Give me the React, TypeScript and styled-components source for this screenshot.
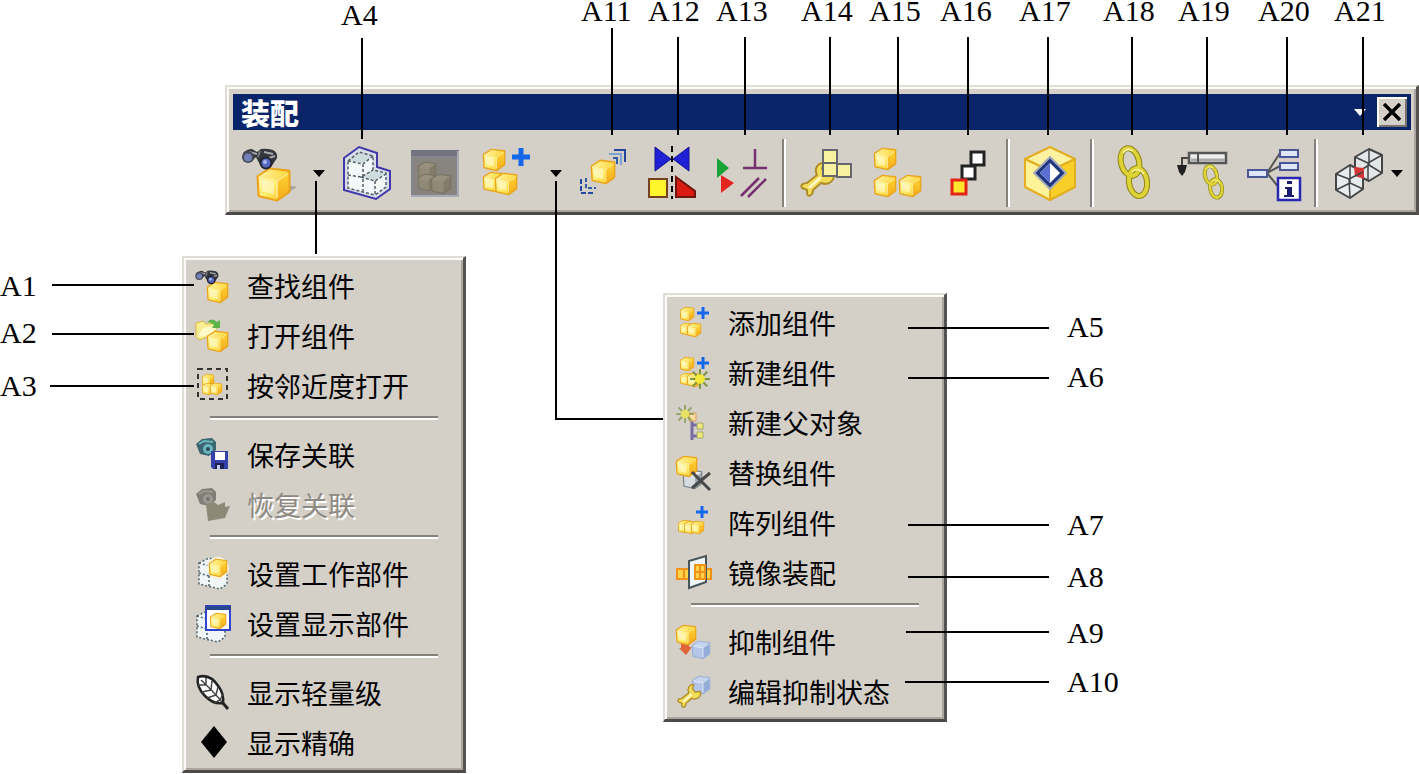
import React from "react";
import styled, { createGlobalStyle, css } from "styled-components";

const face = "#d4d0c8";

const GlobalStyle = createGlobalStyle`
  *, *::before, *::after { box-sizing: border-box; }
  body { margin: 0; background: #fff; }
  button { font: inherit; color: inherit; background: none; border: 0; padding: 0; margin: 0; }
`;

const Figure = styled.main`
  position: relative;
  display: flex;
  flex-direction: column;
  padding-top: 85px;
  color: #000;
  font-family: "Noto Sans CJK SC", "Noto Sans", sans-serif;
`;

const raised = css`
  background: ${face};
  border-style: solid;
  border-width: 2px 3px 3px 2px;
  border-color: #e0ddd6 #55524f #4c4a48 #e0ddd6;
  box-shadow: inset 2px 2px 0 #fbfaf8, inset -2px -2px 0 #aaa69f;
`;

const Toolbar = styled.section`
  ${raised}
  margin-left: 225px;
  padding: 7px 5px 0 6px;
`;

const TitleBar = styled.header`
  display: flex;
  align-items: center;
  height: 36px;
  padding: 0 4px 0 8px;
  background: #0a246a;
  color: #fff;
`;

const Title = styled.h1`
  flex: 1;
  margin: 0;
  font-size: 29px;
  line-height: 36px;
  font-weight: 900;
`;

const TitleCaret = styled.button`
  display: flex;
  justify-content: center;
  width: 14px;
  margin-right: 10px;
`;

const CloseButton = styled.button`
  display: flex;
  align-items: center;
  justify-content: center;
  width: 30px;
  height: 30px;
  background: ${face};
  box-shadow: inset 2px 2px 0 #fff, inset -2px -2px 0 #77736d;
`;

const Tools = styled.div`
  display: flex;
  height: 82px;
  padding-top: 15px;
`;

const Tool = styled.button<{ $narrow?: boolean }>`
  display: flex;
  justify-content: center;
  flex: none;
  width: ${(p) => (p.$narrow ? 64 : 70)}px;
  height: 56px;
`;

const DropArrow = styled.button<{ $narrow?: boolean }>`
  display: flex;
  align-items: center;
  justify-content: center;
  flex: none;
  width: ${(p) => (p.$narrow ? 20 : 27)}px;
  height: 56px;
  padding-left: ${(p) => (p.$narrow ? 0 : 4)}px;
`;

const ToolDivider = styled.span`
  flex: none;
  width: 4px;
  height: 68px;
  margin: -6px 5px 0;
  border-left: 2px solid #85817b;
  border-right: 2px solid #fff;
`;

const ToolSvg = styled.svg`
  display: block;
  width: 56px;
  height: 56px;
  overflow: visible;
`;

const Menus = styled.div`
  display: flex;
  align-items: flex-start;
  padding-left: 182px;
  gap: 197px;
`;

const Menu = styled.div<{ $drop: number }>`
  ${raised}
  width: 284px;
  margin-top: ${(p) => p.$drop}px;
  padding: 3px 0 2px;
`;

const MenuItem = styled.button`
  display: flex;
  align-items: center;
  width: 100%;
  height: 50px;
  padding-left: 10px;
  gap: 17px;
  font-size: 27px;
  line-height: 36px;
  white-space: nowrap;
  text-align: left;

  &:disabled {
    color: #8f8b84;
    text-shadow: 2px 2px 0 #fff;
  }
`;

const MenuSvg = styled.svg`
  flex: none;
  width: 36px;
  height: 36px;
  overflow: visible;
`;

const MenuDivider = styled.hr`
  height: 4px;
  margin: 5px 25px 10px 26px;
  border: 0;
  border-top: 2px solid #85817b;
  border-bottom: 2px solid #fff;
`;

const Leaders = styled.svg`
  position: absolute;
  inset: 0;
  width: 100%;
  height: 100%;
  pointer-events: none;
`;

const Callout = styled.span<{ $x: number; $y: number }>`
  position: absolute;
  left: ${(p) => p.$x}px;
  top: ${(p) => p.$y}px;
  font: 30px/22px "Liberation Serif", serif;
`;

const Defs = styled.svg`
  position: absolute;
  width: 0;
  height: 0;
`;

/* Drawing parts */

type Tone = "gold" | "blue" | "grey" | "mute";
const tones: Record<Tone, [string, string, string, string]> = {
  gold: ["url(#goldFront)", "url(#goldTop)", "url(#goldSide)", "#eba51d"],
  blue: ["#b3c6e8", "#c6d5ee", "#93acd8", "#9fb3d8"],
  grey: ["#d5dde3", "#eef2f4", "#9aa4ac", "#7b858c"],
  mute: ["#8f8976", "#98917d", "#827b69", "#7b7464"],
};

function Cube({ x, y, s, tone = "gold" }: { x: number; y: number; s: number; tone?: Tone }) {
  const [front, top, side, edge] = tones[tone];
  return (
    <g transform={`translate(${x} ${y}) scale(${s / 31})`} strokeLinejoin="round">
      <path d="M1 8 12 1 30 3V22L19 30 2 26Z" fill={edge} stroke={edge} strokeWidth="3" />
      <path d="M1.500 8 19 11V29.500L2.500 25.500Z" fill={front} />
      <path d="M1.500 8 12 1.500 29.500 3.500 19 11Z" fill={top} />
      <path d="M19 11 29.500 3.500V21.500L19 29.500Z" fill={side} />
      {tone === "gold" && <path d="M4 11 16 13V25L5 22Z" fill="#fffce0" opacity=".55" />}
      <path d="M3 9 19 12 29 5M19 12V28" fill="none" stroke={tone === "gold" ? "#fff6b0" : "#fff"} strokeWidth="1.500" opacity={tone === "mute" ? 0.1 : 0.7} />
    </g>
  );
}

function Plus({ x, y, r, w }: { x: number; y: number; r: number; w: number }) {
  return <path d={`M${x - r} ${y}H${x + r}M${x} ${y - r}V${y + r}`} stroke="#1467e8" strokeWidth={w} />;
}

function Binoculars({ scale = 1 }: { scale?: number }) {
  return (
    <g transform={`scale(${scale})`}>
      <path d="M3 8Q7 4 12 4L17 7 21 4Q26 3 33 5 38 8 37 13L31 22 22 22 18 16 16 12 11 17 4 16Z" fill="#34363b" />
      <path d="M9 7 17 9M24 7 33 9M29 13 35 11" stroke="#a7a9ae" strokeWidth="2" />
      <path d="M20 6 18 12" stroke="#77797e" strokeWidth="2" />
      <circle cx="8" cy="12" r="6" fill="#454956" />
      <circle cx="8" cy="12.500" r="4" fill="#7481b8" />
      <circle cx="26" cy="18" r="6.500" fill="#22242b" />
      <circle cx="26" cy="18" r="4.500" fill="#5768c4" />
      <circle cx="25" cy="17" r="2" fill="#aab7ef" />
    </g>
  );
}

function Wrench({ x, y, scale = 1 }: { x: number; y: number; scale?: number }) {
  return (
    <g transform={`translate(${x} ${y}) scale(${scale})`} strokeLinejoin="round" strokeLinecap="round">
      <path
        d="M2 27C0 24 3 22 7 22L17 14C14 8 17 2 24 2L22 8 26 13 33 12C36 19 29 25 21 22L13 29C13 35 8 36 7 33L7 29Z"
        fill="#f3dc57"
        stroke="#b08d2b"
        strokeWidth="2"
      />
      <path d="M10 26 20 17" stroke="#fff8c8" strokeWidth="3" />
    </g>
  );
}

function Star({ x, y, r }: { x: number; y: number; r: number }) {
  const d = r * 0.72;
  return (
    <g>
      <path
        d={`M${x - r} ${y}H${x + r}M${x} ${y - r}V${y + r}M${x - d} ${y - d}L${x + d} ${y + d}M${x - d} ${y + d}L${x + d} ${y - d}`}
        stroke="#7d9441"
        strokeWidth="2"
      />
      <circle cx={x} cy={y} r={r * 0.48} fill="#f3e93a" />
    </g>
  );
}

function Ghost() {
  return (
    <g stroke="#566a70" strokeWidth="1.6" strokeDasharray="2 2" fill="#f1f6f7">
      <path d="M5 7 15 2 24 5V16L33 19V28L26 33 5 28Z" />
      <path d="M5 17 15 20 24 16M15 20V30M5 7 15 10V20" fill="none" />
    </g>
  );
}

function ChainLinks({ scale = 1, x = 0, y = 0 }: { scale?: number; x?: number; y?: number }) {
  const links = (
    <>
      <ellipse cx="24" cy="17" rx="9" ry="14" transform="rotate(-14 24 17)" />
      <ellipse cx="32" cy="37" rx="9" ry="14" transform="rotate(-8 32 37)" />
    </>
  );
  return (
    <g fill="none" transform={`translate(${x} ${y}) scale(${scale})`}>
      <g stroke="#8e8618" strokeWidth="6">{links}</g>
      <g stroke="#ded336" strokeWidth="4">{links}</g>
      <path d="M17 8Q21 2 27 6M26 27Q32 21 38 29" stroke="#f8f3a0" strokeWidth="1.500" />
    </g>
  );
}

const Caret = ({ fill = "#000" }: { fill?: string }) => (
  <svg width="12" height="7" viewBox="0 0 12 7" aria-hidden="true">
    <path d="M0 0H12L6 7Z" fill={fill} />
  </svg>
);

/* Toolbar drawings, 56 x 56 */

const toolArt: Record<string, React.ReactNode> = {
  find: (
    <>
      <path d="M38 54 57 42 48 40Z" fill="#8b8880" opacity=".6" />
      <Cube x={17} y={23} s={33} />
      <Binoculars />
    </>
  ),
  show: (
    <>
      <path d="M7 13 22 2 40 8V22L53 26V44L39 54 7 45Z" fill="#d9dfe9" stroke="#4037a8" strokeWidth="2" />
      <path d="M11 16 22 7 36 11V25L49 28V42L38 50 11 43Z" fill="#f3f8f9" />
      <path d="M11 16 22 7 36 11 26 18ZM24 32 35 25 49 29 38 35Z" fill="#cddcdd" />
      <g fill="none" stroke="#565f69" strokeWidth="1.500" strokeDasharray="3 2">
        <path d="M11 16 22 7 36 11V25L49 28V42L38 50 11 43Z" />
        <path d="M11 16 26 19 36 11M26 19V46M11 30 24 32 36 25M24 32 38 36 49 29M38 36V50" />
      </g>
    </>
  ),
  context: (
    <>
      <path d="M4 5H52V52H4Z" fill="#85868a" />
      <path d="M4 5H52V11H4Z" fill="#72757f" />
      <path d="M7 13H49V49H7Z" fill="#88857f" />
      <path d="M4 51H51V6" stroke="#a9abb4" strokeWidth="2" fill="none" />
      <Cube x={11} y={17} s={18} tone="mute" />
      <Cube x={11} y={29} s={17} tone="mute" />
      <Cube x={24} y={29} s={20} tone="mute" />
    </>
  ),
  add: (
    <>
      <Cube x={6} y={4} s={22} />
      <Cube x={6} y={27} s={20} />
      <Cube x={18} y={28} s={22} />
      <Plus x={44} y={12} r={9} w={5} />
    </>
  ),
  move: (
    <>
      <Cube x={17} y={15} s={24} />
      <g fill="none" strokeWidth="2">
        <path d="M40 5H51V17" stroke="#24479f" />
        <path d="M35 9H47V20" stroke="#7aa1cf" />
        <path d="M39 13H43V19" stroke="#315da5" />
        <path d="M7 34V48H19" stroke="#24479f" strokeDasharray="5 2" />
        <path d="M12 33V43H22" stroke="#315da5" strokeDasharray="4 2" />
      </g>
    </>
  ),
  mirror: (
    <>
      <path d="M11 2V26L27 14ZM45 2V26L29 14Z" fill="#2020d4" stroke="#171792" />
      <path d="M28 1V54" stroke="#000" strokeWidth="2" strokeDasharray="6 4" />
      <path d="M5 34H23V52H5Z" fill="#fff52c" stroke="#75401b" strokeWidth="2" />
      <path d="M32 32 51 46V52H32Z" fill="#d91b12" stroke="#70160f" strokeWidth="2" />
    </>
  ),
  constrain: (
    <>
      <path d="M3 13V33L15 23Z" fill="#19a438" />
      <path d="M7 30V48L20 38Z" fill="#e52520" />
      <path d="M29 23H53M41 4V23M27 51 45 33M34 52 52 34" stroke="#76306f" strokeWidth="2.500" />
    </>
  ),
  edit: (
    <>
      <Wrench x={2} y={16} />
      <g fill="#f7f2a0" stroke="#65676d" strokeWidth="2">
        <path d="M25 5H39V18H25ZM25 18H39V31H25ZM39 19H53V32H39Z" />
      </g>
    </>
  ),
  explode: (
    <>
      <Cube x={6} y={3} s={22} />
      <Cube x={6} y={30} s={22} />
      <Cube x={31} y={30} s={22} />
    </>
  ),
  trace: (
    <g strokeWidth="3">
      <path d="M33 7H46V20H33Z" fill="#fff" stroke="#222" />
      <path d="M24 21H37V34H24Z" fill="#fff" stroke="#222" />
      <path d="M14 35H28V49H14Z" fill="#ffe52c" stroke="#e32419" />
    </g>
  ),
  product: (
    <>
      <g stroke="#e3ae20" strokeWidth="2" strokeLinejoin="round">
        <path d="M3 14 28 2 53 14 28 26Z" fill="#fff3a1" />
        <path d="M3 14 28 26V55L3 42Z" fill="#fff39a" />
        <path d="M53 14 28 26V55L53 42Z" fill="#f7cf28" />
      </g>
      <path d="M28 12 44 28 28 44 12 28Z" fill="#20377f" stroke="#a8abb5" strokeWidth="2" />
      <path d="M28 18 38 28 28 38 18 28Z" fill="#fff" />
      <path d="M28 18V38L18 28Z" fill="#5a6fd0" />
    </>
  ),
  link: <ChainLinks />,
  brokenLink: (
    <>
      <path d="M14 13H6V22" stroke="#444" strokeWidth="2" fill="none" />
      <path d="M1 20H11L9 27 6 31 3 27Z" fill="#222" />
      <path d="M13 8H50V18H13Z" fill="#eee" stroke="#555" strokeWidth="2.500" />
      <path d="M15 15H49" stroke="#a9a9a9" strokeWidth="3" />
      <path d="M22 8V18" stroke="#555" strokeWidth="2" />
      <ChainLinks x={19} y={19} scale={0.66} />
    </>
  ),
  info: (
    <>
      <path d="M21 28 34 8M21 28 34 21M21 28 34 44" stroke="#555" strokeWidth="2" />
      <g fill="#dfe6fb" stroke="#4a5797" strokeWidth="2">
        <path d="M34 5H52V12H34ZM34 18H52V25H34ZM2 25H21V32H2Z" />
      </g>
      <path d="M32 33H54V55H32Z" fill="#fff" stroke="#2727b0" strokeWidth="2.500" />
      <path d="M41 36H46V39H41ZM39 42H46V50H48V52H38V50H41V44H39Z" fill="#1b1b78" />
    </>
  ),
  clearance: (
    <g strokeWidth="2" strokeLinejoin="round" stroke="#434547">
      <path d="M28 12 42 4 55 10V28L42 36 28 29Z" fill="#e4e7e8" />
      <path d="M28 12 41 18 55 10M41 18V36M42 4V20L28 29M42 20 55 28" fill="none" strokeWidth="1.500" />
      <path d="M9 29 23 20 36 27V44L23 53 9 45Z" fill="#e9ecec" />
      <path d="M27 22 37 23V34L28 31Z" fill="#d73535" stroke="none" />
      <path d="M9 29 22 34 36 27M22 34 23 53M23 20V38L9 45M23 38 36 44" fill="none" strokeWidth="1.500" />
    </g>
  ),
};

/* Menu drawings, 36 x 36 */

const threeCubes = (
  <>
    <Cube x={5} y={2} s={14} />
    <Cube x={5} y={18} s={12} />
    <Cube x={12} y={18} s={14} />
  </>
);

const camera = (a: string, b: string, c: string) => (
  <>
    <path d="M2 7 8 2 18 1 22 5V13L15 19 6 17Z" fill={a} />
    <path d="M5 7 10 4 19 5" stroke={b} strokeWidth="2" fill="none" />
    <circle cx="14" cy="12" r="5" fill={b} />
    <circle cx="14" cy="12" r="2" fill={c} />
  </>
);

const menuArt: Record<string, React.ReactNode> = {
  find: (
    <>
      <Cube x={13} y={14} s={21} />
      <Binoculars scale={0.66} />
    </>
  ),
  open: (
    <>
      <path d="M2 5 9 3 12 6 22 5V15L6 22 2 19Z" fill="#f8ee90" stroke="#dbb640" />
      <path d="M3 19 9 10 24 7 18 17Z" fill="#fffac7" />
      <path d="M13 4Q18-1 23 4L26 2V10H18L20 7Q17 4 13 4Z" fill="#5ab447" />
      <Cube x={13} y={13} s={21} />
    </>
  ),
  proximity: (
    <>
      <path d="M4 1H33V31H4Z" fill="none" stroke="#333" strokeWidth="2" strokeDasharray="5 4" />
      <Cube x={8} y={6} s={12} />
      <Cube x={8} y={15} s={12} />
      <Cube x={16} y={15} s={12} />
    </>
  ),
  save: (
    <>
      {camera("#3b6570", "#6bb5bc", "#294c55")}
      <path d="M17 14H34V32H19L17 30Z" fill="#3340aa" />
      <path d="M21 15H31V23H21Z" fill="#fff" />
      <path d="M21 26H30V32H21Z" fill="#1c2153" />
      <path d="M23 28H26V32H23Z" fill="#c8caf0" />
    </>
  ),
  restore: (
    <>
      {camera("#807e77", "#9a9890", "#77756e")}
      <path d="M12 18 20 15 24 18 31 15V20L36 19 31 31 14 34Z" fill="#8e8977" />
    </>
  ),
  work: (
    <>
      <Ghost />
      <circle cx="24" cy="12" r="11" fill="#fff4da" />
      <Cube x={15} y={3} s={18} />
    </>
  ),
  display: (
    <>
      <g transform="translate(-2 3)"><Ghost /></g>
      <path d="M12 0H36V24H12Z" fill="#fff" stroke="#3044cb" strokeWidth="2" />
      <path d="M11 0H37V4H11Z" fill="#29458f" />
      <Cube x={16} y={7} s={16} />
    </>
  ),
  feather: (
    <>
      <path d="M4 2Q16-2 25 12 30 19 29 28 20 30 11 21 2 12 4 2Z" fill="#fff" stroke="#222" strokeWidth="2.500" />
      <path d="M28 27 34 34" stroke="#222" strokeWidth="3" />
      <path d="M7 5Q20 17 28 27M12 10 12 3M17 15 18 6M22 20 24 12M26 25 29 19M12 10 4 10M17 15 8 17M22 20 13 23M26 25 20 28" stroke="#444" strokeWidth="1.500" fill="none" />
    </>
  ),
  diamond: <path d="M20 1 33 17 20 33 7 17Z" fill="#000" />,
  add: (
    <>
      {threeCubes}
      <Plus x={28} y={8} r={6} w={3} />
    </>
  ),
  create: (
    <>
      {threeCubes}
      <Plus x={28} y={8} r={6} w={3} />
      <Star x={25} y={24} r={10} />
    </>
  ),
  parent: (
    <>
      <path d="M17 15V35M17 20H24M17 31H24" stroke="#776da3" strokeWidth="3" />
      <path d="M14 8H21V16H14Z" fill="#f7db9b" stroke="#d59e62" />
      <path d="M22 18H28V24H22ZM22 27H28V33H22Z" fill="#eee779" stroke="#a9a86b" />
      <g opacity=".7"><Star x={10} y={9} r={9} /></g>
    </>
  ),
  replace: (
    <>
      <Cube x={8} y={15} s={19} tone="grey" />
      <Cube x={1} y={1} s={21} />
      <path d="M17 17 35 35M35 18 17 33" stroke="#47494b" strokeWidth="3" />
    </>
  ),
  array: (
    <>
      <Cube x={3} y={15} s={13} />
      <Cube x={9} y={16} s={13} />
      <Cube x={16} y={16} s={13} />
      <Plus x={27} y={7} r={6} w={3} />
    </>
  ),
  mirror: (
    <>
      <path d="M2 14H15V24H2ZM26 14H36V24H26Z" fill="#ffd447" stroke="#f0931a" strokeWidth="2" />
      <path d="M9 14V24" stroke="#f0931a" strokeWidth="2" />
      <path d="M14 6 31 1V27L14 33Z" fill="#eef5f7" stroke="#47545a" strokeWidth="2" />
      <path d="M20 10H30V24H20ZM20 17H30M25 10V24" fill="#ffd447" stroke="#f0931a" strokeWidth="2" />
    </>
  ),
  suppress: (
    <>
      <path d="M6 18H14V23H17L11 31 4 24H6Z" fill="#e0663a" />
      <Cube x={1} y={1} s={20} />
      <Cube x={17} y={17} s={18} tone="blue" />
    </>
  ),
  state: (
    <>
      <Cube x={17} y={2} s={18} tone="blue" />
      <Wrench x={2} y={9} scale={0.7} />
    </>
  ),
};

interface ToolSpec {
  art?: string;
  label?: string;
  kind?: "arrow" | "divider";
  narrow?: boolean;
}

const tools: ToolSpec[] = [
  { art: "find", label: "查找组件" },
  { kind: "arrow", label: "查找组件选项" },
  { art: "show", label: "按邻近度显示" },
  { art: "context", label: "恢复关联" },
  { art: "add", label: "添加组件" },
  { kind: "arrow", label: "添加组件选项" },
  { art: "move", label: "移动组件" },
  { art: "mirror", label: "镜像装配" },
  { art: "constrain", label: "装配约束" },
  { kind: "divider" },
  { art: "edit", label: "编辑布置" },
  { art: "explode", label: "爆炸图" },
  { art: "trace", label: "装配序列" },
  { kind: "divider" },
  { art: "product", label: "产品接口" },
  { kind: "divider" },
  { art: "link", label: "部件间链接" },
  { art: "brokenLink", label: "链接浏览器" },
  { art: "info", label: "关系浏览器" },
  { kind: "divider" },
  { art: "clearance", label: "装配间隙", narrow: true },
  { kind: "arrow", label: "装配间隙选项", narrow: true },
];

interface Entry {
  art: string;
  text: string;
  disabled?: boolean;
}

const findMenu: Entry[][] = [
  [
    { art: "find", text: "查找组件" },
    { art: "open", text: "打开组件" },
    { art: "proximity", text: "按邻近度打开" },
  ],
  [
    { art: "save", text: "保存关联" },
    { art: "restore", text: "恢复关联", disabled: true },
  ],
  [
    { art: "work", text: "设置工作部件" },
    { art: "display", text: "设置显示部件" },
  ],
  [
    { art: "feather", text: "显示轻量级" },
    { art: "diamond", text: "显示精确" },
  ],
];

const addMenu: Entry[][] = [
  [
    { art: "add", text: "添加组件" },
    { art: "create", text: "新建组件" },
    { art: "parent", text: "新建父对象" },
    { art: "replace", text: "替换组件" },
    { art: "array", text: "阵列组件" },
    { art: "mirror", text: "镜像装配" },
  ],
  [
    { art: "suppress", text: "抑制组件" },
    { art: "state", text: "编辑抑制状态" },
  ],
];

const callouts: [string, number, number][] = [
  ["A1", 0, 275], ["A2", 0, 322], ["A3", 0, 375],
  ["A4", 341, 4],
  ["A5", 1067, 316], ["A6", 1067, 366], ["A7", 1067, 514],
  ["A8", 1067, 566], ["A9", 1067, 622], ["A10", 1067, 671],
  ["A11", 581, 0], ["A12", 648, 0], ["A13", 716, 0], ["A14", 801, 0],
  ["A15", 869, 0], ["A16", 940, 0], ["A17", 1019, 0], ["A18", 1103, 0],
  ["A19", 1178, 0], ["A20", 1258, 0], ["A21", 1334, 0],
];

const leaderPaths = [
  "M362 38V139",
  "M612 28V135",
  ...[678, 745, 830, 898, 968, 1048, 1132, 1207, 1287, 1363].map((x) => `M${x} 37V135`),
  "M316 181V254",
  "M556 181V419H663",
  "M52 285H194M52 334H194M50 386H194",
  "M908 328H1049M908 378H1049M908 525H1049M908 577H1049M906 632H1049M905 682H1049",
];

function PopupMenu({ groups, label, drop }: { groups: Entry[][]; label: string; drop: number }) {
  return (
    <Menu role="menu" aria-label={label} $drop={drop}>
      {groups.map((group, i) => (
        <React.Fragment key={i}>
          {i > 0 && <MenuDivider />}
          {group.map((entry) => (
            <MenuItem key={entry.text} role="menuitem" disabled={entry.disabled}>
              <MenuSvg viewBox="0 0 36 36" aria-hidden="true">{menuArt[entry.art]}</MenuSvg>
              {entry.text}
            </MenuItem>
          ))}
        </React.Fragment>
      ))}
    </Menu>
  );
}

export default function App() {
  return (
    <Figure>
      <GlobalStyle />
      <Defs aria-hidden="true">
        <defs>
          <linearGradient id="goldFront" x1="0" y1="0" x2="1" y2="1">
            <stop offset="0" stopColor="#fff7ac" />
            <stop offset="0.6" stopColor="#ffea62" />
            <stop offset="1" stopColor="#fdd03a" />
          </linearGradient>
          <linearGradient id="goldTop" x1="0" y1="0" x2="1" y2="0">
            <stop offset="0" stopColor="#fff3a0" />
            <stop offset="1" stopColor="#ffd83c" />
          </linearGradient>
          <linearGradient id="goldSide" x1="0" y1="0" x2="0" y2="1">
            <stop offset="0" stopColor="#ffd535" />
            <stop offset="1" stopColor="#f5ab1a" />
          </linearGradient>
        </defs>
      </Defs>

      <Toolbar aria-label="装配">
        <TitleBar>
          <Title>装配</Title>
          <TitleCaret aria-label="工具条选项"><Caret fill="#fff" /></TitleCaret>
          <CloseButton aria-label="关闭">
            <svg width="20" height="18" viewBox="0 0 20 18" aria-hidden="true">
              <path d="M2 1 18 17M18 1 2 17" stroke="#000" strokeWidth="3.500" />
            </svg>
          </CloseButton>
        </TitleBar>
        <Tools>
          {tools.map((tool, i) => {
            if (tool.kind === "divider") return <ToolDivider key={i} />;
            if (tool.kind === "arrow") {
              return (
                <DropArrow key={i} aria-label={tool.label} $narrow={tool.narrow}><Caret /></DropArrow>
              );
            }
            return (
              <Tool key={i} aria-label={tool.label} $narrow={tool.narrow}>
                <ToolSvg viewBox="0 0 56 56" aria-hidden="true">{toolArt[tool.art!]}</ToolSvg>
              </Tool>
            );
          })}
        </Tools>
      </Toolbar>

      <Menus>
        <PopupMenu groups={findMenu} label="查找组件" drop={41} />
        <PopupMenu groups={addMenu} label="添加组件" drop={78} />
      </Menus>

      <Leaders aria-hidden="true">
        <path d={leaderPaths.join("")} fill="none" stroke="#000" strokeWidth="2" />
      </Leaders>
      {callouts.map(([text, x, y]) => (
        <Callout key={text} $x={x} $y={y}>{text}</Callout>
      ))}
    </Figure>
  );
}
